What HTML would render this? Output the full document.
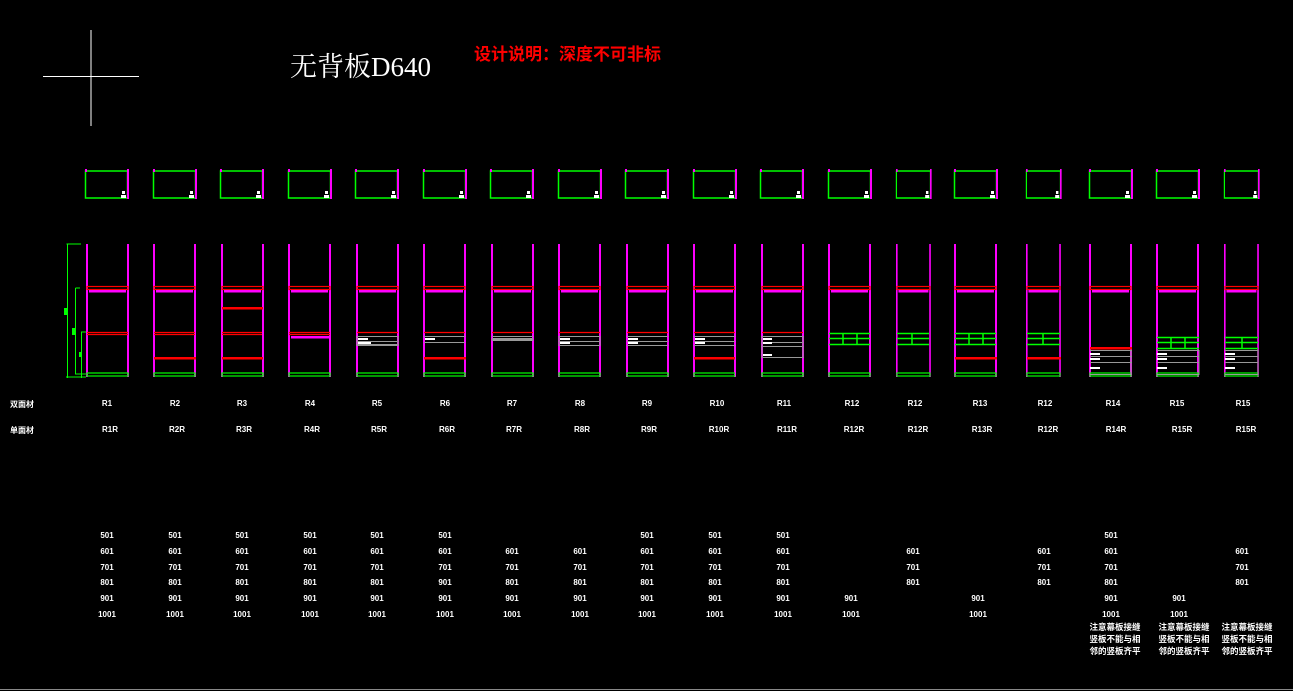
<!DOCTYPE html>
<html><head><meta charset="utf-8"><style>
html,body{margin:0;padding:0;background:#000;}
body{width:1293px;height:691px;overflow:hidden;}
svg{display:block}
text{font-family:"Liberation Sans","Noto Sans CJK SC",sans-serif;fill:#fff;}
</style></head><body>
<svg width="1293" height="691" viewBox="0 0 1293 691" xmlns="http://www.w3.org/2000/svg">
<defs>
<g id="top">
 <rect x="0.5" y="171" width="42" height="27" fill="none" stroke="#0f0" stroke-width="1.5"/>
 <rect x="42" y="169" width="2" height="30" fill="#f0f"/>
 <rect x="0" y="169" width="2" height="3" fill="#f0f"/>
 <rect x="37" y="191" width="3" height="3" fill="#fff"/>
 <rect x="36" y="195" width="5" height="3" fill="#fff"/>
</g>
<g id="cab">
 <rect x="0" y="244" width="2" height="133" fill="#f0f"/>
 <rect x="41" y="244" width="2" height="133" fill="#f0f"/>
 <rect x="1" y="286.5" width="41" height="3" fill="none" stroke="#f00" stroke-width="1.2"/>
 <rect x="3" y="290" width="37" height="2.5" fill="#f0f"/>
 <rect x="1" y="373" width="41" height="3" fill="none" stroke="#0f0" stroke-width="1.2"/>
</g>
</defs>

<line x1="91" y1="30" x2="91" y2="126" stroke="#fff" stroke-width="1"/>
<line x1="43" y1="76.5" x2="139" y2="76.5" stroke="#fff" stroke-width="1"/>

<text x="290" y="76" style="font-family:'Liberation Serif','Noto Serif CJK SC',serif;font-size:27px">无背板D640</text>
<text x="474" y="60" style="font-size:17px;font-weight:bold;fill:#f00">设计说明：深度不可非标</text>

<g stroke="#0f0" stroke-width="1" fill="none">
<path d="M66.5 244 H81 M67.5 244 V378 M66 377 H86"/>
<path d="M75.5 288 H80 M75.5 288 V374 H86"/>
<path d="M81.5 332 V378 M81 332 H86"/>
</g>
<rect x="64" y="308" width="3" height="7" fill="#0f0"/>
<rect x="72" y="328" width="3" height="7" fill="#0f0"/>
<rect x="79" y="352" width="2" height="5" fill="#0f0"/>

<use href="#top" x="85"/><use href="#top" x="153"/><use href="#top" x="220"/><use href="#top" x="288"/>
<use href="#top" x="355"/><use href="#top" x="423"/><use href="#top" x="490"/><use href="#top" x="558"/>
<use href="#top" x="625"/><use href="#top" x="693"/><use href="#top" x="760"/><use href="#top" x="828"/>
<use href="#top" transform="translate(896 0) scale(0.81 1)"/><use href="#top" x="954"/>
<use href="#top" transform="translate(1026 0) scale(0.81 1)"/><use href="#top" x="1089"/><use href="#top" x="1156"/>
<use href="#top" transform="translate(1224 0) scale(0.81 1)"/>

<use href="#cab" x="86"/><use href="#cab" x="153"/><use href="#cab" x="221"/><use href="#cab" x="288"/>
<use href="#cab" x="356"/><use href="#cab" x="423"/><use href="#cab" x="491"/><use href="#cab" x="558"/>
<use href="#cab" x="626"/><use href="#cab" x="693"/><use href="#cab" x="761"/><use href="#cab" x="828"/>
<use href="#cab" transform="translate(896 0) scale(0.81 1)"/><use href="#cab" x="954"/>
<use href="#cab" transform="translate(1026 0) scale(0.81 1)"/><use href="#cab" x="1089"/><use href="#cab" x="1156"/>
<use href="#cab" transform="translate(1224 0) scale(0.81 1)"/>

<g fill="none" stroke="#f00" stroke-width="1.2">
<path d="M87 332.5 H128 M87 334.5 H128"/>
<path d="M154 332.5 H195 M154 334.5 H195"/>
<path d="M222 332.5 H262 M222 334.5 H262"/>
<path d="M289 332.5 H330 M289 334.5 H330"/>
<path d="M357 332.5 H398 M424 332.5 H465 M492 332.5 H533 M559 332.5 H600 M627 332.5 H668 M694 332.5 H735 M762 332.5 H803"/>
</g>
<g fill="#f00">
<rect x="154" y="357" width="42" height="2.5"/>
<rect x="222" y="307" width="41" height="2.5"/>
<rect x="222" y="357" width="41" height="2.5"/>
<rect x="424" y="357" width="42" height="2.5"/>
<rect x="694" y="357" width="42" height="2.5"/>
<rect x="955" y="357" width="42" height="2.5"/>
<rect x="1027" y="357" width="34" height="2.5"/>
<rect x="1090" y="347" width="42" height="2.5"/>
</g>
<rect x="291" y="336" width="38" height="2.5" fill="#f0f"/>
<line x1="735.5" y1="244" x2="735.5" y2="376" stroke="#f0f" stroke-width="1"/>

<g fill="none" stroke="#999" stroke-width="1">
<path d="M357 336.5 H398 M357 341.5 H398 M357 345.5 H398 M357 336 V346 M398 336 V346"/>
<path d="M424 336.5 H465 M424 342.5 H465"/>
<path d="M492 336.5 H533"/>
<path d="M559 336.5 H600 M559 341.5 H600 M559 345.5 H600 M559 336 V346 M600 336 V346"/>
<path d="M627 336.5 H668 M627 341.5 H668 M627 345.5 H668"/>
<path d="M694 336.5 H735 M694 341.5 H735 M694 345.5 H735"/>
<path d="M762 336.5 H803 M762 342.5 H803 M762 346.5 H803 M762 357.5 H803 M762 336 V358 M803 336 V358"/>
<path d="M1090 350.5 H1132 M1090 356.5 H1132 M1090 362.5 H1132 M1090 374.5 H1132 M1131 350 V375"/>
<path d="M1157 350.5 H1199 M1157 356.5 H1199 M1157 362.5 H1199 M1157 374.5 H1199 M1199 350 V375"/>
<path d="M1225 350.5 H1258 M1225 356.5 H1258 M1225 362.5 H1258 M1225 374.5 H1258 M1258 350 V375"/>
</g>
<rect x="492" y="338" width="41" height="3" fill="#999"/>
<rect x="357" y="344" width="41" height="2" fill="#999"/>
<g fill="#fff">
<rect x="358" y="338" width="10" height="2"/><rect x="358" y="342" width="13" height="2"/>
<rect x="425" y="338" width="10" height="2"/>
<rect x="560" y="338" width="10" height="2"/><rect x="560" y="342" width="10" height="2"/>
<rect x="628" y="338" width="10" height="2"/><rect x="628" y="342" width="10" height="2"/>
<rect x="695" y="338" width="10" height="2"/><rect x="695" y="342" width="10" height="2"/>
<rect x="763" y="338" width="9" height="2"/><rect x="763" y="342" width="9" height="2"/><rect x="763" y="354" width="9" height="2"/>
<rect x="1090" y="353" width="10" height="2"/><rect x="1090" y="358" width="10" height="2"/><rect x="1090" y="367" width="10" height="2"/>
<rect x="1157" y="353" width="10" height="2"/><rect x="1157" y="358" width="10" height="2"/><rect x="1157" y="367" width="10" height="2"/>
<rect x="1225" y="353" width="10" height="2"/><rect x="1225" y="358" width="10" height="2"/><rect x="1225" y="367" width="10" height="2"/>
</g>

<g fill="none" stroke="#0f0" stroke-width="1.5">
<path d="M829 333.5 H870 M829 338.5 H870 M829 344.5 H870 M843 333 V345 M857 333 V345"/>
<path d="M897 333.5 H929 M897 338.5 H929 M897 344.5 H929 M912 333 V345"/>
<path d="M955 333.5 H996 M955 338.5 H996 M955 344.5 H996 M969 333 V345 M983 333 V345"/>
<path d="M1027 333.5 H1060 M1027 338.5 H1060 M1027 344.5 H1060 M1043 333 V345"/>
<path d="M1157 337.5 H1199 M1157 342.5 H1199 M1157 348.5 H1199 M1171 337 V349 M1185 337 V349"/>
<path d="M1225 337.5 H1258 M1225 342.5 H1258 M1225 348.5 H1258 M1242 337 V349"/>
</g>

<g style="font-size:8px;font-weight:bold" text-anchor="middle">
<text x="22" y="407">双面材</text><text x="22" y="433">单面材</text>
<text x="107" y="406">R1</text><text x="175" y="406">R2</text><text x="242" y="406">R3</text><text x="310" y="406">R4</text>
<text x="377" y="406">R5</text><text x="445" y="406">R6</text><text x="512" y="406">R7</text><text x="580" y="406">R8</text>
<text x="647" y="406">R9</text><text x="717" y="406">R10</text><text x="784" y="406">R11</text><text x="852" y="406">R12</text>
<text x="915" y="406">R12</text><text x="980" y="406">R13</text><text x="1045" y="406">R12</text><text x="1113" y="406">R14</text>
<text x="1177" y="406">R15</text><text x="1243" y="406">R15</text>
<text x="110" y="432">R1R</text><text x="177" y="432">R2R</text><text x="244" y="432">R3R</text><text x="312" y="432">R4R</text>
<text x="379" y="432">R5R</text><text x="447" y="432">R6R</text><text x="514" y="432">R7R</text><text x="582" y="432">R8R</text>
<text x="649" y="432">R9R</text><text x="719" y="432">R10R</text><text x="787" y="432">R11R</text><text x="854" y="432">R12R</text>
<text x="918" y="432">R12R</text><text x="982" y="432">R13R</text><text x="1048" y="432">R12R</text><text x="1116" y="432">R14R</text>
<text x="1182" y="432">R15R</text><text x="1246" y="432">R15R</text>
</g>

<g style="font-size:8px;font-weight:bold" text-anchor="middle">
<g transform="translate(107 0)"><text y="538">501</text><text y="554">601</text><text y="570">701</text><text y="585">801</text><text y="601">901</text><text y="617">1001</text></g>
<g transform="translate(175 0)"><text y="538">501</text><text y="554">601</text><text y="570">701</text><text y="585">801</text><text y="601">901</text><text y="617">1001</text></g>
<g transform="translate(242 0)"><text y="538">501</text><text y="554">601</text><text y="570">701</text><text y="585">801</text><text y="601">901</text><text y="617">1001</text></g>
<g transform="translate(310 0)"><text y="538">501</text><text y="554">601</text><text y="570">701</text><text y="585">801</text><text y="601">901</text><text y="617">1001</text></g>
<g transform="translate(377 0)"><text y="538">501</text><text y="554">601</text><text y="570">701</text><text y="585">801</text><text y="601">901</text><text y="617">1001</text></g>
<g transform="translate(445 0)"><text y="538">501</text><text y="554">601</text><text y="570">701</text><text y="585">901</text><text y="601">901</text><text y="617">1001</text></g>
<g transform="translate(512 0)"><text y="554">601</text><text y="570">701</text><text y="585">801</text><text y="601">901</text><text y="617">1001</text></g>
<g transform="translate(580 0)"><text y="554">601</text><text y="570">701</text><text y="585">801</text><text y="601">901</text><text y="617">1001</text></g>
<g transform="translate(647 0)"><text y="538">501</text><text y="554">601</text><text y="570">701</text><text y="585">801</text><text y="601">901</text><text y="617">1001</text></g>
<g transform="translate(715 0)"><text y="538">501</text><text y="554">601</text><text y="570">701</text><text y="585">801</text><text y="601">901</text><text y="617">1001</text></g>
<g transform="translate(783 0)"><text y="538">501</text><text y="554">601</text><text y="570">701</text><text y="585">801</text><text y="601">901</text><text y="617">1001</text></g>
<g transform="translate(851 0)"><text y="601">901</text><text y="617">1001</text></g>
<g transform="translate(913 0)"><text y="554">601</text><text y="570">701</text><text y="585">801</text></g>
<g transform="translate(978 0)"><text y="601">901</text><text y="617">1001</text></g>
<g transform="translate(1044 0)"><text y="554">601</text><text y="570">701</text><text y="585">801</text></g>
<g transform="translate(1111 0)"><text y="538">501</text><text y="554">601</text><text y="570">701</text><text y="585">801</text><text y="601">901</text><text y="617">1001</text></g>
<g transform="translate(1179 0)"><text y="601">901</text><text y="617">1001</text></g>
<g transform="translate(1242 0)"><text y="554">601</text><text y="570">701</text><text y="585">801</text></g>
</g>
<g style="font-size:8.5px;font-weight:bold" text-anchor="middle">
<g transform="translate(1115 0)"><text y="630">注意幕板接缝</text><text y="642">竖板不能与相</text><text y="654">邻的竖板齐平</text></g>
<g transform="translate(1184 0)"><text y="630">注意幕板接缝</text><text y="642">竖板不能与相</text><text y="654">邻的竖板齐平</text></g>
<g transform="translate(1247 0)"><text y="630">注意幕板接缝</text><text y="642">竖板不能与相</text><text y="654">邻的竖板齐平</text></g>
</g>
<line x1="0" y1="689.5" x2="1293" y2="689.5" stroke="#888" stroke-width="1"/>
</svg>
</body></html>
